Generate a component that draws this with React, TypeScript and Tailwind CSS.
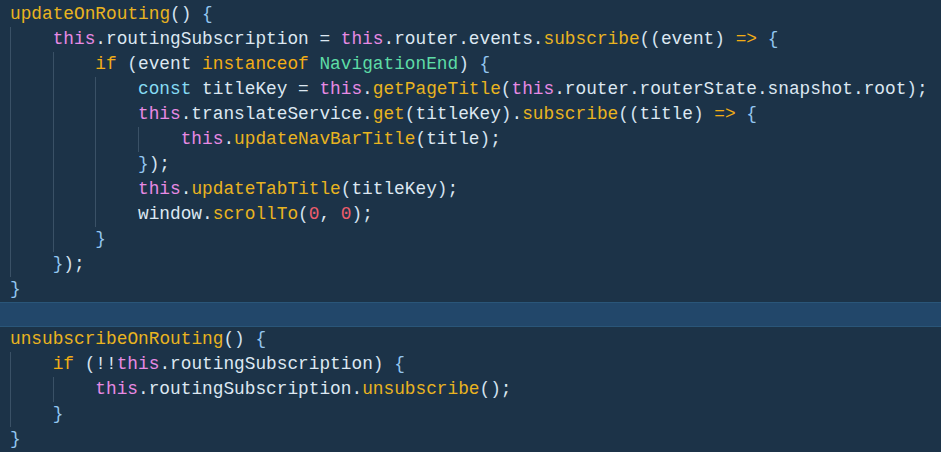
import React from 'react';

type Tok = [string, string?];

const C = {
  id: 'text-[#dde8f2]',
  self: 'text-[#e88ae4]',
  fn: 'text-[#e9b420]',
  kw: 'text-[#f2ad16]',
  decl: 'text-[#86dcf4]',
  cls: 'text-[#5edca6]',
  num: 'text-[#ee5d6c]',
  brace: 'text-[#93c6f0]',
  paren: 'text-[#d3e2f0]',
};

const lines: { indent: number; toks: Tok[]; active?: boolean }[] = [
  { indent: 0, toks: [['updateOnRouting', C.fn], ['()', C.paren], [' '], ['{', C.brace]] },
  {
    indent: 1,
    toks: [
      ['this', C.self], ['.routingSubscription = '], ['this', C.self], ['.router.events.'],
      ['subscribe', C.fn], ['((', C.paren], ['event'], [')', C.paren], [' '], ['=>', C.kw], [' '], ['{', C.brace],
    ],
  },
  {
    indent: 2,
    toks: [
      ['if', C.kw], [' '], ['(', C.paren], ['event '], ['instanceof', C.kw], [' '],
      ['NavigationEnd', C.cls], [')', C.paren], [' '], ['{', C.brace],
    ],
  },
  {
    indent: 3,
    toks: [
      ['const', C.decl], [' titleKey = '], ['this', C.self], ['.'], ['getPageTitle', C.fn], ['(', C.paren],
      ['this', C.self], ['.router.routerState.snapshot.root'], [')', C.paren], [';'],
    ],
  },
  {
    indent: 3,
    toks: [
      ['this', C.self], ['.translateService.'], ['get', C.fn], ['(', C.paren], ['titleKey'], [')', C.paren], ['.'],
      ['subscribe', C.fn], ['((', C.paren], ['title'], [')', C.paren], [' '], ['=>', C.kw], [' '], ['{', C.brace],
    ],
  },
  {
    indent: 4,
    toks: [['this', C.self], ['.'], ['updateNavBarTitle', C.fn], ['(', C.paren], ['title'], [')', C.paren], [';']],
  },
  { indent: 3, toks: [['}', C.brace], [')', C.paren], [';']] },
  {
    indent: 3,
    toks: [['this', C.self], ['.'], ['updateTabTitle', C.fn], ['(', C.paren], ['titleKey'], [')', C.paren], [';']],
  },
  {
    indent: 3,
    toks: [['window.'], ['scrollTo', C.fn], ['(', C.paren], ['0', C.num], [', '], ['0', C.num], [')', C.paren], [';']],
  },
  { indent: 2, toks: [['}', C.brace]] },
  { indent: 1, toks: [['}', C.brace], [')', C.paren], [';']] },
  { indent: 0, toks: [['}', C.brace]] },
  { indent: 0, toks: [], active: true },
  { indent: 0, toks: [['unsubscribeOnRouting', C.fn], ['()', C.paren], [' '], ['{', C.brace]] },
  {
    indent: 1,
    toks: [
      ['if', C.kw], [' '], ['(', C.paren], ['!!'], ['this', C.self], ['.routingSubscription'],
      [')', C.paren], [' '], ['{', C.brace],
    ],
  },
  {
    indent: 2,
    toks: [['this', C.self], ['.routingSubscription.'], ['unsubscribe', C.fn], ['()', C.paren], [';']],
  },
  { indent: 1, toks: [['}', C.brace]] },
  { indent: 0, toks: [['}', C.brace]] },
];

const App: React.FC = () => {
  return (
    <div
      className="w-[941px] h-[452px] overflow-hidden bg-[#1c3348] pt-[2px] text-[17.8px] leading-[25px] text-[#dde8f2] whitespace-pre"
      style={{ fontFamily: '"Liberation Mono", "Courier New", monospace' }}
    >
      {lines.map((line, i) => (
        <div
          key={i}
          className={
            line.active
              ? 'h-[25px] flex pl-[10px] bg-[#22476a] border-y border-[#2a5679]'
              : 'h-[25px] flex pl-[10px]'
          }
        >
          {/* indent guides */}
          {Array.from({ length: line.indent }).map((_, k) => (
            <span key={k} className="w-[4ch] h-full shrink-0 border-l border-[#3a5166]" />
          ))}
          <span>
            {line.toks.map(([text, cls], j) => (
              <span key={j} className={cls ?? C.id}>
                {text}
              </span>
            ))}
          </span>
        </div>
      ))}
    </div>
  );
};

export default App;
